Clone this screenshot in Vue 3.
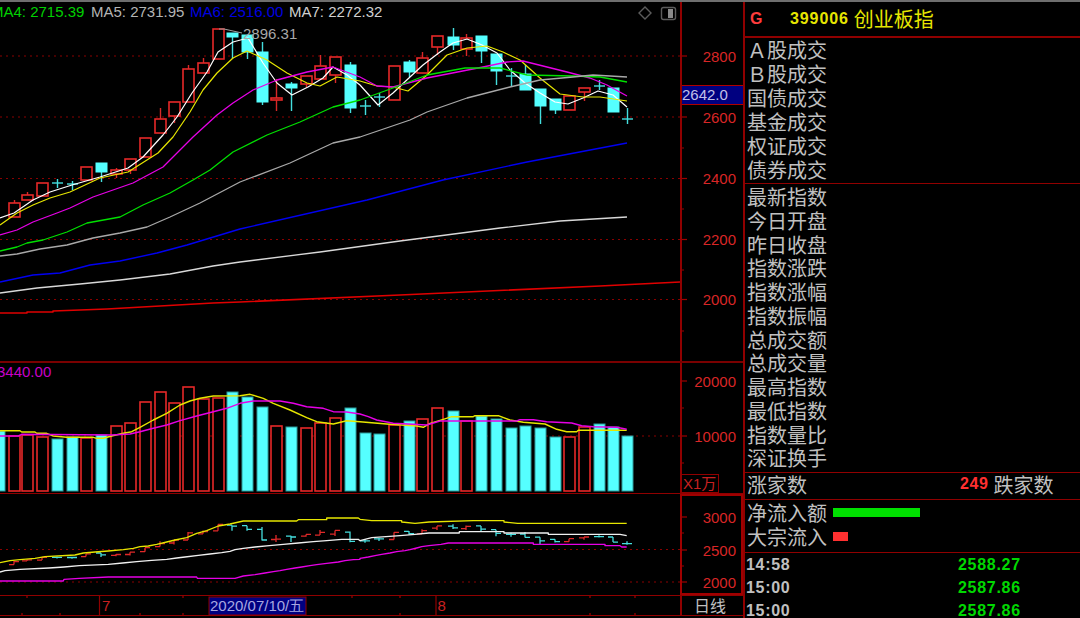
<script setup>
// x, up?, body top, body bottom, wick top, wick bottom
const candles = [
  [14, 1, 203, 217, 200, 217], [27, 1, 195, 200, 192, 200], [42, 1, 183, 196, 183, 196],
  [57, 0, 183, 183, 179, 188], [72, 0, 184, 184, 181, 190], [86, 1, 167, 180, 167, 180],
  [101, 0, 163, 172, 163, 182], [116, 1, 170, 174, 168, 178], [130, 1, 159, 170, 159, 174],
  [145, 1, 138, 157, 138, 157], [160, 1, 119, 133, 108, 133], [174, 1, 102, 116, 102, 123],
  [188, 1, 69, 102, 65, 102], [203, 1, 63, 73, 58, 73], [218, 1, 29, 59, 29, 59],
  [232, 0, 33, 37, 33, 59], [247, 0, 35, 52, 35, 59], [262, 0, 52, 102, 42, 105],
  [276, 1, 98, 100, 79, 111], [291, 0, 84, 88, 82, 111], [306, 1, 76, 84, 76, 87],
  [320, 1, 66, 79, 55, 79], [335, 1, 57, 75, 57, 83], [350, 0, 65, 108, 62, 113],
  [365, 0, 106, 106, 100, 115], [379, 0, 97, 97, 93, 107], [394, 1, 66, 100, 66, 100],
  [409, 0, 62, 72, 60, 77], [422, 1, 58, 73, 52, 73], [437, 1, 36, 47, 36, 55],
  [453, 0, 37, 45, 28, 50], [466, 1, 38, 49, 34, 56], [481, 0, 36, 51, 36, 63],
  [496, 0, 54, 71, 54, 85], [511, 0, 76, 76, 68, 87], [525, 0, 74, 90, 65, 90],
  [540, 0, 89, 106, 89, 124], [555, 0, 99, 110, 99, 114], [569, 1, 96, 110, 96, 110],
  [584, 1, 88, 92, 88, 101], [599, 0, 86, 86, 80, 90], [613, 0, 88, 112, 88, 112],
  [627, 0, 119, 119, 108, 124]
]

const volumes = [
  [-1, 0, 431], [14, 1, 436], [27, 1, 435], [42, 1, 437], [57, 0, 439], [72, 0, 437],
  [86, 1, 438], [101, 0, 435], [116, 1, 426], [130, 1, 423], [145, 1, 402], [160, 1, 392],
  [174, 1, 403], [188, 1, 387], [203, 1, 399], [218, 1, 398], [232, 0, 392], [247, 0, 397],
  [262, 0, 407], [276, 1, 426], [291, 0, 427], [306, 1, 428], [320, 1, 423], [335, 1, 418],
  [350, 0, 408], [365, 0, 433], [379, 0, 434], [394, 1, 425], [409, 0, 421], [422, 1, 419],
  [437, 1, 408], [453, 0, 411], [466, 1, 421], [481, 0, 416], [496, 0, 419], [511, 0, 428],
  [525, 0, 426], [540, 0, 428], [555, 0, 437], [569, 1, 437], [584, 1, 427], [599, 0, 424],
  [613, 0, 427], [627, 0, 436]
]

const priceLines = [
  { color: '#ffffff', width: 1.2, d: '0,218 14,213 33,200 50,192 72,185 100,177 128,168 143,157 163,135 177,117 192,93 207,72 218,52 233,42 248,38 263,63 277,83 292,95 308,87 323,78 333,67 347,75 360,85 378,105 393,93 410,77 423,65 440,52 453,43 467,39 482,45 497,53 510,70 525,83 540,93 555,102 568,104 583,98 598,91 613,95 627,107' },
  { color: '#e6e600', width: 1.2, d: '0,225 17,213 33,205 50,198 70,192 100,178 128,172 158,153 173,137 190,112 203,90 217,73 233,58 247,51 267,60 287,73 307,83 320,86 337,77 360,81 377,86 393,87 408,91 427,75 447,55 467,48 487,46 503,52 520,60 540,78 560,94 583,97 600,97 627,101' },
  { color: '#e600e6', width: 1.3, d: '0,235 17,230 33,222 57,213 70,208 93,197 133,183 163,167 193,137 217,115 233,103 253,90 277,80 307,72 333,67 360,77 377,86 393,87 427,78 483,67 507,62 523,61 543,66 567,72 590,78 607,85 627,96' },
  { color: '#00e000', width: 1.3, d: '0,251 17,247 27,243 43,240 67,232 87,223 120,217 143,205 170,193 193,180 210,170 233,152 267,135 300,122 333,107 360,100 393,88 427,75 465,68 500,68 527,75 573,76 600,77 627,82' },
  { color: '#a8a8a8', width: 1.3, d: '0,256 17,254 40,249 67,245 93,238 120,233 147,227 170,217 200,203 240,182 290,163 333,143 360,137 410,120 427,112 467,98 510,87 540,80 573,77 593,75 627,77' },
  { color: '#0000f0', width: 1.4, d: '0,282 33,275 60,273 90,265 120,261 157,253 187,245 240,229 367,200 443,180 527,162 627,143' },
  { color: '#d8d8d8', width: 1.3, d: '0,293 37,288 80,284 120,280 170,274 213,266 240,262 320,252 400,241 500,228 560,221 627,217' },
  { color: '#e00000', width: 1.6, d: '0,313 27,313 27,312 53,312 53,311 107,309 160,306 213,303 240,302 400,295 600,286 640,284 680,282' }
]

// stair-stepped lines below were read off at 3x, so they are scaled back here
function scaled(list, dx, dy) {
  let out = ''
  for (let i = 0; i < list.length; i += 2) {
    out += `${(list[i] / 3 + dx).toFixed(1)},${(list[i + 1] / 3 + dy).toFixed(1)} `
  }
  return out
}

const volumeLines = [
  {
    color: '#e6e600',
    d: scaled([0,242,60,242,65,246,105,246,110,250,140,250,160,258,200,262,280,262,290,265,310,265,335,258,370,250,395,245,420,232,460,210,500,190,540,165,570,153,600,145,640,138,720,137,750,133,790,145,820,160,870,180,920,203,950,215,1000,222,1040,212,1080,215], 0, 350) +
      scaled([35,218,80,222,125,225,170,228,190,232,210,220,250,208,275,200,340,200,345,197,415,197,450,210,490,217,555,222,590,238,620,245,650,245,655,241,800,241], 360, 350)
  },
  {
    color: '#e600e6',
    d: scaled([0,258,55,258,65,253,335,255,390,252,420,245,460,235,500,225,540,212,590,198,640,185,680,175,720,160,760,153,840,153,880,160,920,170,970,175,1000,185,1040,186,1080,192], 0, 350) +
      scaled([25,200,50,210,85,217,100,220,200,225,240,213,470,213,480,209,520,209,560,215,635,219,665,227,700,230,770,232,800,238], 360, 350)
  }
]

const indexLines = [
  {
    color: '#e6e600',
    d: scaled([0,218,30,212,60,209,105,205,135,200,225,195,250,189,285,186,325,183,370,179,400,175,420,170,445,168,470,163,500,156,525,150,560,143,590,130,620,122,655,108,690,102,730,93,890,93,895,89,980,89,980,84,1075,84], 0, 490) +
      scaled([0,88,35,92,125,92,125,96,165,100,207,96,340,92,432,92,432,96,473,100,800,100], 360, 490)
  },
  {
    color: '#f0f0f0',
    d: scaled([0,246,15,242,60,238,147,234,192,231,238,227,325,223,368,219,410,215,455,211,500,208,530,204,555,201,595,196,630,192,665,188,690,184,705,179,730,175,765,171,808,167,850,163,895,159,940,155,980,152,1025,148,1075,148], 0, 490) +
      scaled([0,152,35,143,78,140,120,137,165,133,207,129,298,129,298,125,432,125,432,129,565,129,565,133,780,133,800,137], 360, 490)
  },
  {
    color: '#e600e6',
    d: scaled([0,273,190,273,192,268,238,265,325,261,590,261,592,265,705,265,730,258,765,254,795,249,820,245,840,242,860,238,885,234,905,231,930,227,950,224,980,220,1015,216,1035,212,1060,209,1080,208], 0, 490) +
      scaled([0,205,25,201,45,197,65,193,90,189,110,185,135,182,150,179,170,174,185,170,207,167,243,163,265,159,520,159,520,163,735,163,735,167,780,167,785,171,800,171], 360, 490)
  }
]

// same bars as the top pane, on the index scale of the bottom pane
function toIndexY(y) {
  const price = 2800 - ((y - 56) * 200) / 61
  return 549.7 - (price - 2500) * 0.0652
}

function candlePath(c) {
  const open = toIndexY(c[1] ? c[3] : c[2])
  const close = toIndexY(c[1] ? c[2] : c[3])
  const x = c[0]
  return `M${x - 5},${open.toFixed(1)}H${x}M${x},${toIndexY(c[4]).toFixed(1)}V${toIndexY(c[5]).toFixed(1)}M${x},${close.toFixed(1)}H${x + 5}`
}

const mainTicks = [
  { y: 56, label: '2800' }, { y: 87 }, { y: 117, label: '2600' }, { y: 148 }, { y: 178.5, label: '2400' },
  { y: 209 }, { y: 239.5, label: '2200' }, { y: 270 }, { y: 299.5, label: '2000' }, { y: 331 }
]
const volTicks = [{ y: 381, label: '20000' }, { y: 408 }, { y: 436, label: '10000' }, { y: 463 }]
const indexTicks = [
  { y: 517, label: '3000' }, { y: 533 }, { y: 550, label: '2500' }, { y: 566 }, { y: 582, label: '2000' }
]

const turnover = ['Ａ股成交', 'Ｂ股成交', '国债成交', '基金成交', '权证成交', '债券成交']
const stats = ['最新指数', '今日开盘', '昨日收盘', '指数涨跌', '指数涨幅', '指数振幅', '总成交额', '总成交量', '最高指数', '最低指数', '指数量比', '深证换手']
const ticks = [
  { time: '14:58', value: '2588.27' },
  { time: '15:00', value: '2587.86' },
  { time: '15:00', value: '2587.86' }
]
</script>

<template>
  <div class="terminal">
    <div class="charts">
      <section class="pane pane-main">
        <svg class="plot" width="680" height="359" viewBox="0 2 680 359">
          <line v-for="y in [56, 117, 178.5, 239.5, 299.5]" :key="y" class="grid" x1="0" x2="680" :y1="y" :y2="y" />
          <g v-for="c in candles" :key="c[0]">
            <line :class="c[1] ? 'wick-up' : 'wick-down'" :x1="c[0] + 0.5" :x2="c[0] + 0.5" :y1="c[4]" :y2="c[5]" />
            <line v-if="c[2] === c[3]" class="cross" :x1="c[0] - 5" :x2="c[0] + 6" :y1="c[2]" :y2="c[2]" />
            <rect v-else :class="c[1] ? 'bar-up' : 'bar-down'" :x="c[0] - 5" :y="c[2]" width="11" :height="c[3] - c[2]" />
          </g>
          <polyline v-for="l in priceLines" :key="l.color" class="ma" :points="l.d" :stroke="l.color" :stroke-width="l.width" />
          <polyline class="peak" points="219,29 224,29 242,33" />
          <text class="legend peak-text" x="243" y="39">2896.31</text>
          <text class="legend" x="-9" y="17" fill="#00d000">MA4: 2715.39</text>
          <text class="legend" x="91" y="17" fill="#b4b4b4">MA5: 2731.95</text>
          <text class="legend" x="190" y="17" fill="#0000e0">MA6: 2516.00</text>
          <text class="legend" x="289" y="17" fill="#d0d0d0">MA7: 2272.32</text>
          <path class="tool" d="M645,7l6,6l-6,6l-6,-6z" />
          <rect class="tool" x="661.5" y="7.5" width="14" height="12" rx="2" />
          <rect x="668" y="9" width="5" height="9" fill="#8a8a8a" />
        </svg>
        <svg class="axis" width="61" height="359" viewBox="682 2 61 359">
          <g v-for="t in mainTicks" :key="t.y">
            <line class="tick" x1="682" :x2="t.label ? 687 : 684" :y1="t.y" :y2="t.y" />
            <text v-if="t.label" class="axis-text" x="736" :y="t.y + 5.5">{{ t.label }}</text>
          </g>
        </svg>
        <div class="last-price">2642.0</div>
      </section>

      <section class="pane pane-vol">
        <svg class="plot" width="680" height="130" viewBox="0 363 680 130">
          <line class="grid" x1="0" x2="680" y1="436" y2="436" />
          <rect v-for="v in volumes" :key="v[0]" :class="v[1] ? 'vol-up' : 'vol-down'" :x="v[0] - 5" :y="v[2]" width="11" :height="491 - v[2]" />
          <polyline v-for="l in volumeLines" :key="l.color" class="ma" :points="l.d" :stroke="l.color" stroke-width="1.4" />
          <text class="legend" x="-3" y="377" fill="#c800c8">3440.00</text>
        </svg>
        <svg class="axis" width="61" height="130" viewBox="682 363 61 130">
          <g v-for="t in volTicks" :key="t.y">
            <line class="tick" x1="682" :x2="t.label ? 687 : 684" :y1="t.y" :y2="t.y" />
            <text v-if="t.label" class="axis-text" x="736" :y="t.y + 5.5">{{ t.label }}</text>
          </g>
        </svg>
        <div class="unit">X1万</div>
      </section>

      <section class="pane pane-index">
        <svg class="plot" width="680" height="101" viewBox="0 494 680 101">
          <line v-for="y in [549.5, 582]" :key="y" class="grid" x1="0" x2="680" :y1="y" :y2="y" />
          <path v-for="c in candles" :key="c[0]" class="mini" :d="candlePath(c)" :stroke="c[1] ? '#e02828' : '#44dede'" />
          <polyline v-for="l in indexLines" :key="l.color" class="ma" :points="l.d" :stroke="l.color" stroke-width="1.3" />
        </svg>
        <svg class="axis axis-box" width="59" height="97" viewBox="682 496 59 97">
          <g v-for="t in indexTicks" :key="t.y">
            <line class="tick" x1="682" :x2="t.label ? 687 : 684" :y1="t.y" :y2="t.y" />
            <text v-if="t.label" class="axis-text" x="736" :y="t.y + 5.5">{{ t.label }}</text>
          </g>
        </svg>
      </section>

      <footer class="timebar">
        <svg class="plot" width="680" height="19" viewBox="0 596 680 19">
          <path class="tick" d="M27,596v2M183,596v2M400,596v2M590,596v2M635,596v2M352,596v2M22,613v2M60,613v2M140,613v2M183,613v2M400,613v2M590,613v2M635,613v2" />
          <line class="tick-strong" x1="99.5" x2="99.5" y1="596" y2="615" />
          <line class="tick-strong" x1="436" x2="436" y1="596" y2="615" />
          <text class="axis-date" x="102" y="610.5">7</text>
          <text class="axis-date" x="437.5" y="610.5">8</text>
          <rect class="date-bg" x="209" y="597" width="97" height="18" />
          <text class="date-text" x="210" y="610.5">2020/07/10/五</text>
        </svg>
        <div class="period">日线</div>
      </footer>
    </div>

    <aside class="side">
      <header class="side-head">
        <span class="flag">G</span>
        <span class="code">399006</span>
        <span class="name">创业板指</span>
      </header>
      <div class="block block-turnover">
        <div v-for="t in turnover" :key="t" class="row">{{ t }}</div>
      </div>
      <div class="block block-stats">
        <div v-for="s in stats" :key="s" class="row row-stat">{{ s }}</div>
      </div>
      <div class="block block-breadth">
        <span>涨家数</span>
        <b class="down-count">249</b>
        <span>跌家数</span>
      </div>
      <div class="block block-flow">
        <div class="row flow-row">净流入额<i class="flow flow-net"></i></div>
        <div class="row flow-row">大宗流入<i class="flow flow-block"></i></div>
      </div>
      <div class="trades">
        <div v-for="(t, i) in ticks" :key="i" class="trade">
          <span>{{ t.time }}</span>
          <span class="trade-value">{{ t.value }}</span>
        </div>
      </div>
    </aside>
  </div>
</template>

<style>
html,
body {
  margin: 0;
  background: #000;
}
</style>

<style scoped>
.terminal {
  display: flex;
  width: 1080px;
  height: 618px;
  box-sizing: border-box;
  border-top: 2px solid #6e6e6e;
  background: #000;
  overflow: hidden;
  font-family: "Noto Sans CJK SC", "Liberation Sans", sans-serif;
  color: #c0c0c0;
}

.charts {
  display: flex;
  flex-direction: column;
  width: 743px;
  flex: none;
}

.pane,
.timebar {
  position: relative;
  display: flex;
  flex: none;
}

.pane-main {
  height: 359px;
}

.pane-vol {
  height: 130px;
  border-top: 2px solid #7a0000;
}

.pane-index {
  height: 101px;
  border-top: 1px solid #900000;
  border-bottom: 1px solid #900000;
}

.timebar {
  height: 19px;
  border-bottom: 1px solid #900000;
}

.plot,
.axis {
  display: block;
  flex: none;
}

.axis {
  border-left: 2px solid #900000;
}

.axis-box {
  border: 2px solid #a00000;
}

.grid {
  stroke: #8a0000;
  stroke-width: 1;
  stroke-dasharray: 2 4;
}

.wick-up {
  stroke: #d82828;
  stroke-width: 1.4;
}

.wick-down,
.cross {
  stroke: #44dede;
  stroke-width: 1.4;
}

.bar-up {
  fill: #000;
  stroke: #e62828;
  stroke-width: 1.6;
}

.bar-down {
  fill: #55ffff;
  stroke: #55ffff;
}

.vol-up {
  fill: #000;
  stroke: #e62828;
  stroke-width: 1.6;
}

.vol-down {
  fill: #55ffff;
  stroke: #2c9c9c;
  stroke-width: 1;
}

.ma {
  fill: none;
  stroke-linejoin: round;
}

.mini {
  fill: none;
  stroke-width: 1.3;
}

.peak {
  fill: none;
  stroke: #a0a0a0;
  stroke-width: 1;
}

.legend,
.axis-text,
.axis-date,
.date-text {
  font-family: "Liberation Sans", sans-serif;
  font-size: 15px;
}

.peak-text {
  fill: #a8a8a8;
}

.tool {
  fill: none;
  stroke: #5c5c5c;
  stroke-width: 1.4;
}

.tick {
  fill: none;
  stroke: #a00000;
  stroke-width: 1.2;
}

.tick-strong {
  stroke: #900000;
  stroke-width: 1.2;
}

.axis-text {
  fill: #d82626;
  text-anchor: end;
}

.axis-date {
  fill: #c82020;
}

.date-bg {
  fill: #000080;
  stroke: #900000;
}

.date-text {
  fill: #a8a8e0;
}

.last-price {
  position: absolute;
  left: 682px;
  top: 83px;
  width: 61px;
  height: 20px;
  box-sizing: border-box;
  border-top: 1px solid #b00000;
  border-bottom: 1px solid #b00000;
  background: #000080;
  color: #c0c0e8;
  font: 15px/18px "Liberation Sans", sans-serif;
}

.unit {
  position: absolute;
  left: 680px;
  bottom: 0;
  width: 39px;
  height: 19px;
  box-sizing: border-box;
  padding-left: 2px;
  border: 1px solid #900000;
  color: #c82020;
  font: 15px/18px "Liberation Sans", "Noto Sans CJK SC", sans-serif;
}

.period {
  width: 63px;
  box-sizing: border-box;
  padding-right: 5px;
  border-left: 2px solid #900000;
  text-align: center;
  font-size: 16px;
  line-height: 18px;
}

.side {
  display: flex;
  flex-direction: column;
  flex: 1;
  border-left: 2px solid #900000;
  font-size: 20px;
}

.side-head {
  display: flex;
  flex: none;
  align-items: center;
  height: 34px;
  padding-left: 5px;
  border-bottom: 2px solid #900000;
  color: #e6e600;
}

.flag {
  width: 40px;
  color: #ff3c3c;
  font: bold 16px "Liberation Sans", sans-serif;
}

.code {
  margin-right: 5px;
  font: bold 16px "Liberation Sans", sans-serif;
  letter-spacing: 0.9px;
}

.name {
  line-height: 24px;
}

.block {
  flex: none;
  padding-left: 2px;
  border-bottom: 1px solid #900000;
}

.row {
  height: 24px;
  line-height: 24px;
  white-space: nowrap;
}

.row-stat {
  height: 23.75px;
  line-height: 23.75px;
}

.block-turnover {
  height: 145px;
}

.block-stats {
  height: 289px;
  padding-top: 1px;
  box-sizing: border-box;
}

.block-breadth {
  display: flex;
  align-items: center;
  height: 22px;
  padding-bottom: 4px;
}

.down-count {
  margin-left: 153px;
  margin-right: 5px;
  color: #ff3030;
  font: bold 16px "Liberation Sans", sans-serif;
  letter-spacing: 0.6px;
}

.block-flow {
  height: 53px;
  padding-top: 1px;
  box-sizing: border-box;
}

.flow-row {
  display: flex;
  align-items: center;
}

.flow {
  display: block;
  height: 9px;
  margin: -2px 0 0 6px;
}

.flow-net {
  width: 87px;
  background: #00e000;
}

.flow-block {
  width: 15px;
  background: #ff3030;
}

.trades {
  flex: none;
  padding-left: 1px;
  font: bold 16px "Liberation Sans", sans-serif;
  letter-spacing: 0.7px;
}

.trade {
  display: flex;
  height: 23px;
  line-height: 23px;
}

.trade span:first-child {
  width: 212px;
}

.trade-value {
  color: #00d800;
}
</style>
